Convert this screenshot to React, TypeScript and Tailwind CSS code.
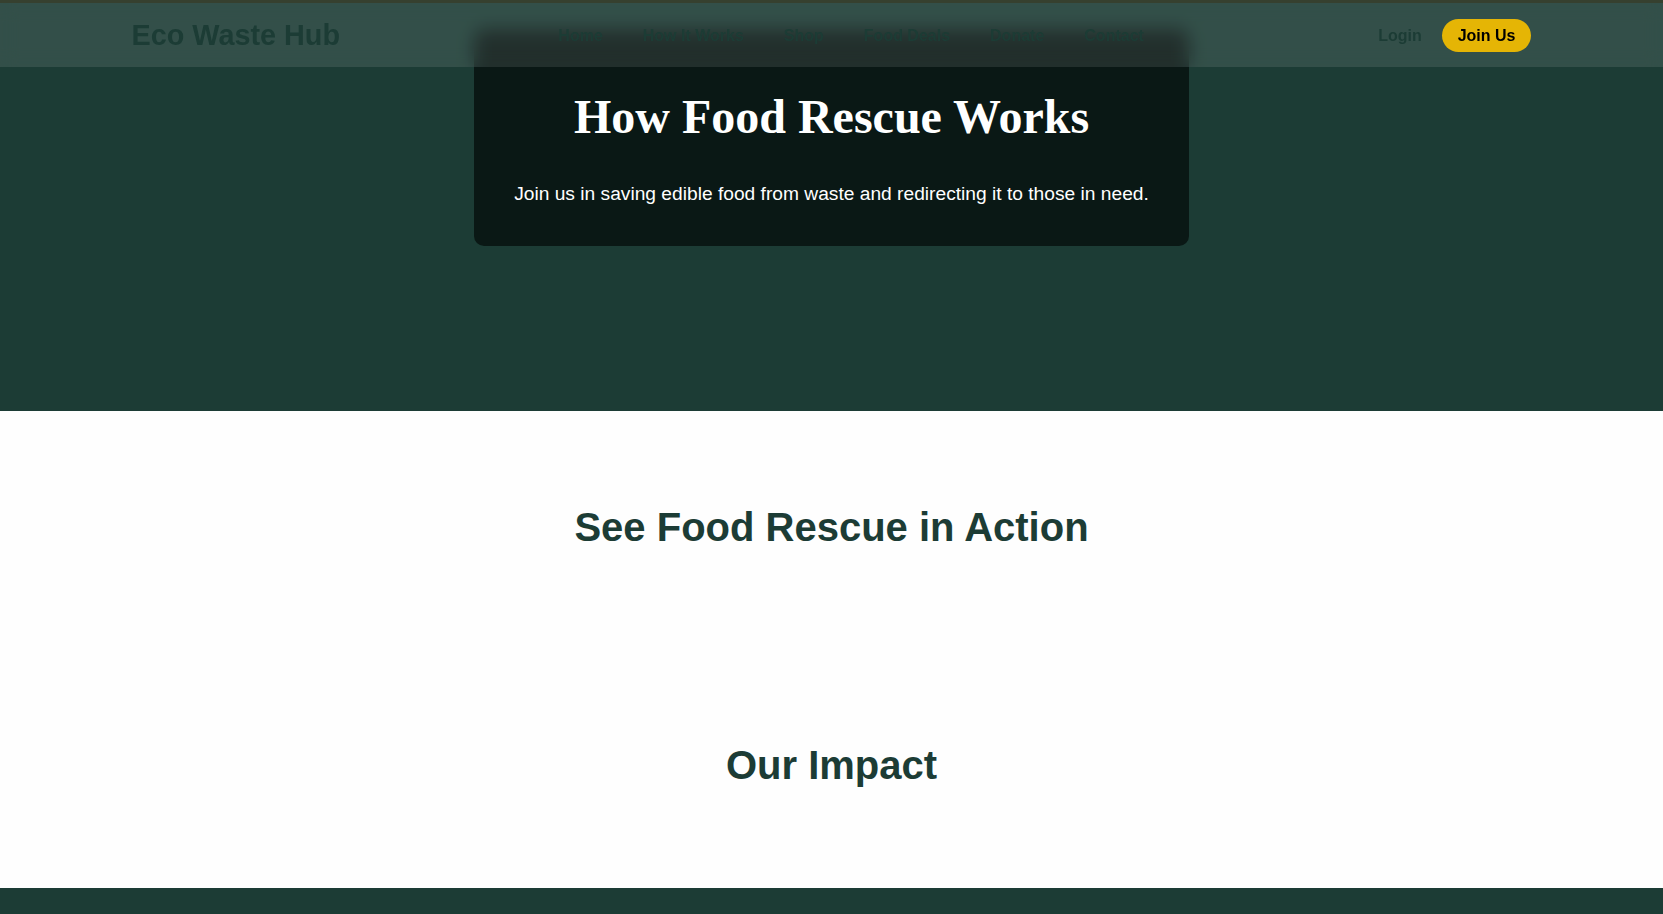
import React from "react";

const navLinks = ["Home", "How It Works", "Shop", "Food Deals", "Donate", "Contact"];

function Header() {
  return (
    <header className="absolute left-0 right-0 top-[3px] z-10 h-[64px] bg-white/10 backdrop-blur-[9px]">
      <div className="mx-auto flex h-full max-w-[1400px] items-center justify-between pt-px">
        <a className="text-[1.8rem] font-bold leading-none text-[#1c3c35]">Eco Waste Hub</a>
        <nav className="flex items-center gap-10">
          {navLinks.map((link) => (
            <a key={link} className="text-base font-bold text-[#1c3c35]">
              {link}
            </a>
          ))}
        </nav>
        <div className="ml-4 flex items-center gap-5">
          <a className="text-base font-bold text-[#1c3c35]">Login</a>
          <button className="flex h-[33px] items-center rounded-full bg-[#e5b505] px-4 text-base font-bold text-black">
            Join Us
          </button>
        </div>
      </div>
    </header>
  );
}

function Hero() {
  return (
    <section className="h-[408px] bg-[#1c3c35] pt-[26px]">
      <div className="mx-auto w-[715px] rounded-[10px] bg-[#0a1815] px-8 pb-[38px] pt-[59px] text-center text-white">
        <h1 className="font-['Liberation_Serif',serif] text-5xl font-bold leading-[1.2]">
          How Food Rescue Works
        </h1>
        <p className="mt-[34px] text-[1.2rem] leading-[1.5]">
          Join us in saving edible food from waste and redirecting it to those in need.
        </p>
      </div>
    </section>
  );
}

export default function App() {
  return (
    <div className="relative min-h-screen bg-[#fefefe] font-['Liberation_Sans',Arial,sans-serif]">
      <div className="h-[3px] bg-[#36402f]" />
      <Header />
      <Hero />
      <section className="bg-[#fefefe] pt-[92px] text-center">
        <h2 className="text-[40px] font-bold leading-[1.2] text-[#1c3c35]">See Food Rescue in Action</h2>
      </section>
      <section className="bg-[#fefefe] pb-[99px] pt-[190px] text-center">
        <h2 className="text-[40px] font-bold leading-[1.2] text-[#1c3c35]">Our Impact</h2>
      </section>
      <footer className="h-[120px] bg-[#1c3c35]" />
    </div>
  );
}
